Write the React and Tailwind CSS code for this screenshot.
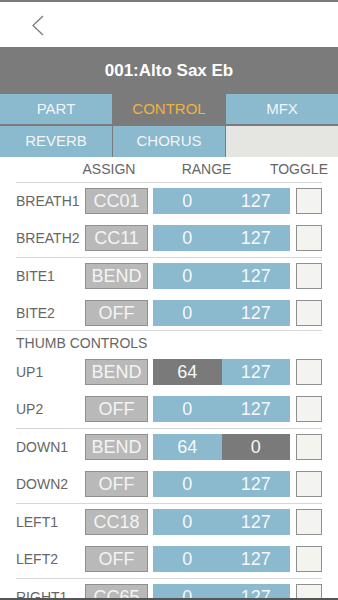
import React from 'react';

const BLUE = 'bg-[#8bb9cd]';

const groups = [
  {
    rows: [
      { label: 'BREATH1', assign: 'CC01', lo: '0', hi: '127' },
      { label: 'BREATH2', assign: 'CC11', lo: '0', hi: '127' },
    ],
  },
  {
    rows: [
      { label: 'BITE1', assign: 'BEND', lo: '0', hi: '127' },
      { label: 'BITE2', assign: 'OFF', lo: '0', hi: '127', short: true },
    ],
  },
  {
    title: 'THUMB CONTROLS',
    rows: [
      { label: 'UP1', assign: 'BEND', lo: '64', hi: '127', loDark: true },
      { label: 'UP2', assign: 'OFF', lo: '0', hi: '127' },
    ],
  },
  {
    rows: [
      { label: 'DOWN1', assign: 'BEND', lo: '64', hi: '0', hiDark: true },
      { label: 'DOWN2', assign: 'OFF', lo: '0', hi: '127' },
    ],
  },
  {
    rows: [
      { label: 'LEFT1', assign: 'CC18', lo: '0', hi: '127' },
      { label: 'LEFT2', assign: 'OFF', lo: '0', hi: '127' },
    ],
  },
  {
    rows: [{ label: 'RIGHT1', assign: 'CC65', lo: '0', hi: '127' }],
  },
];

function Row({ row }) {
  return (
    <div className={`flex items-start pt-[5px] ${row.short ? 'h-[35px]' : 'h-[37px]'}`}>
      <div className="w-[69px] h-[26px] flex items-center text-[14px] text-[#666]">{row.label}</div>
      <div className="w-[63px] h-[26px] bg-[#b9b9b9] border border-[#8f8f8f] flex items-center justify-center text-[18px] text-[#f4f4f4]">
        {row.assign}
      </div>
      <div className="ml-[5px] w-[137px] h-[26px] flex text-[18px] text-[#f4f8fa]">
        <div className={`flex-1 flex items-center justify-center ${row.loDark ? 'bg-[#7a7a7a]' : BLUE}`}>{row.lo}</div>
        <div className={`flex-1 flex items-center justify-center ${row.hiDark ? 'bg-[#7a7a7a]' : BLUE}`}>{row.hi}</div>
      </div>
      <div className="ml-[6px] w-[26px] h-[26px] bg-[#f3f3f0] border border-[#8f8f8f]" />
    </div>
  );
}

export default function App() {
  return (
    <div className="w-[338px] h-[600px] overflow-hidden bg-white flex flex-col font-['Liberation_Sans',Arial,sans-serif]">
      <div className="h-[2px] shrink-0 bg-[#7a7a7a]" />
      {/* nav */}
      <div className="h-[45px] shrink-0 flex items-center pl-[31px]">
        <svg width="14" height="22" viewBox="0 0 14 22" fill="none">
          <path d="M12 2 L2 11.5 L12 21" stroke="#7c7c7c" strokeWidth="1.3" />
        </svg>
      </div>

      {/* title + tabs */}
      <div className="bg-[#7b7b7b] shrink-0">
        <div className="h-[47px] flex items-center justify-center text-white font-bold text-[17px]">001:Alto Sax Eb</div>
        <div className="grid grid-cols-[112px_112px_1fr] gap-x-[1px] gap-y-[2px] text-[15px]">
          <div className={`h-[30px] flex items-center justify-center text-[#f2f6f8] ${BLUE}`}>PART</div>
          <div className="h-[30px] flex items-center justify-center text-[#f0b23e]">CONTROL</div>
          <div className={`h-[30px] flex items-center justify-center text-[#f2f6f8] ${BLUE}`}>MFX</div>
          <div className={`h-[31px] flex items-center justify-center text-[#f2f6f8] ${BLUE}`}>REVERB</div>
          <div className={`h-[31px] flex items-center justify-center text-[#f2f6f8] ${BLUE}`}>CHORUS</div>
          <div className="h-[31px] bg-[#e5e5e1]" />
        </div>
      </div>

      {/* list */}
      <div className="flex-1 min-h-0 overflow-hidden px-[16px]">
        <div className="h-[26px] flex items-center text-[14px] text-[#666] border-b border-[#d6d6d6]">
          <div className="w-[69px]" />
          <div className="w-[63px] text-center">ASSIGN</div>
          <div className="ml-[5px] w-[137px] text-center">RANGE</div>
          <div className="flex-1 text-right -mr-[6px]">TOGGLE</div>
        </div>
        {groups.map((g, i) => (
          <div key={i} className={i > 0 ? 'border-t border-[#d6d6d6]' : ''}>
            {g.title && (
              <div className="h-[23px] flex items-end text-[14px] text-[#666]">{g.title}</div>
            )}
            {g.rows.map(r => (
              <Row key={r.label} row={r} />
            ))}
          </div>
        ))}
      </div>
      <div className="h-[2px] shrink-0 bg-[#555]" />
    </div>
  );
}
